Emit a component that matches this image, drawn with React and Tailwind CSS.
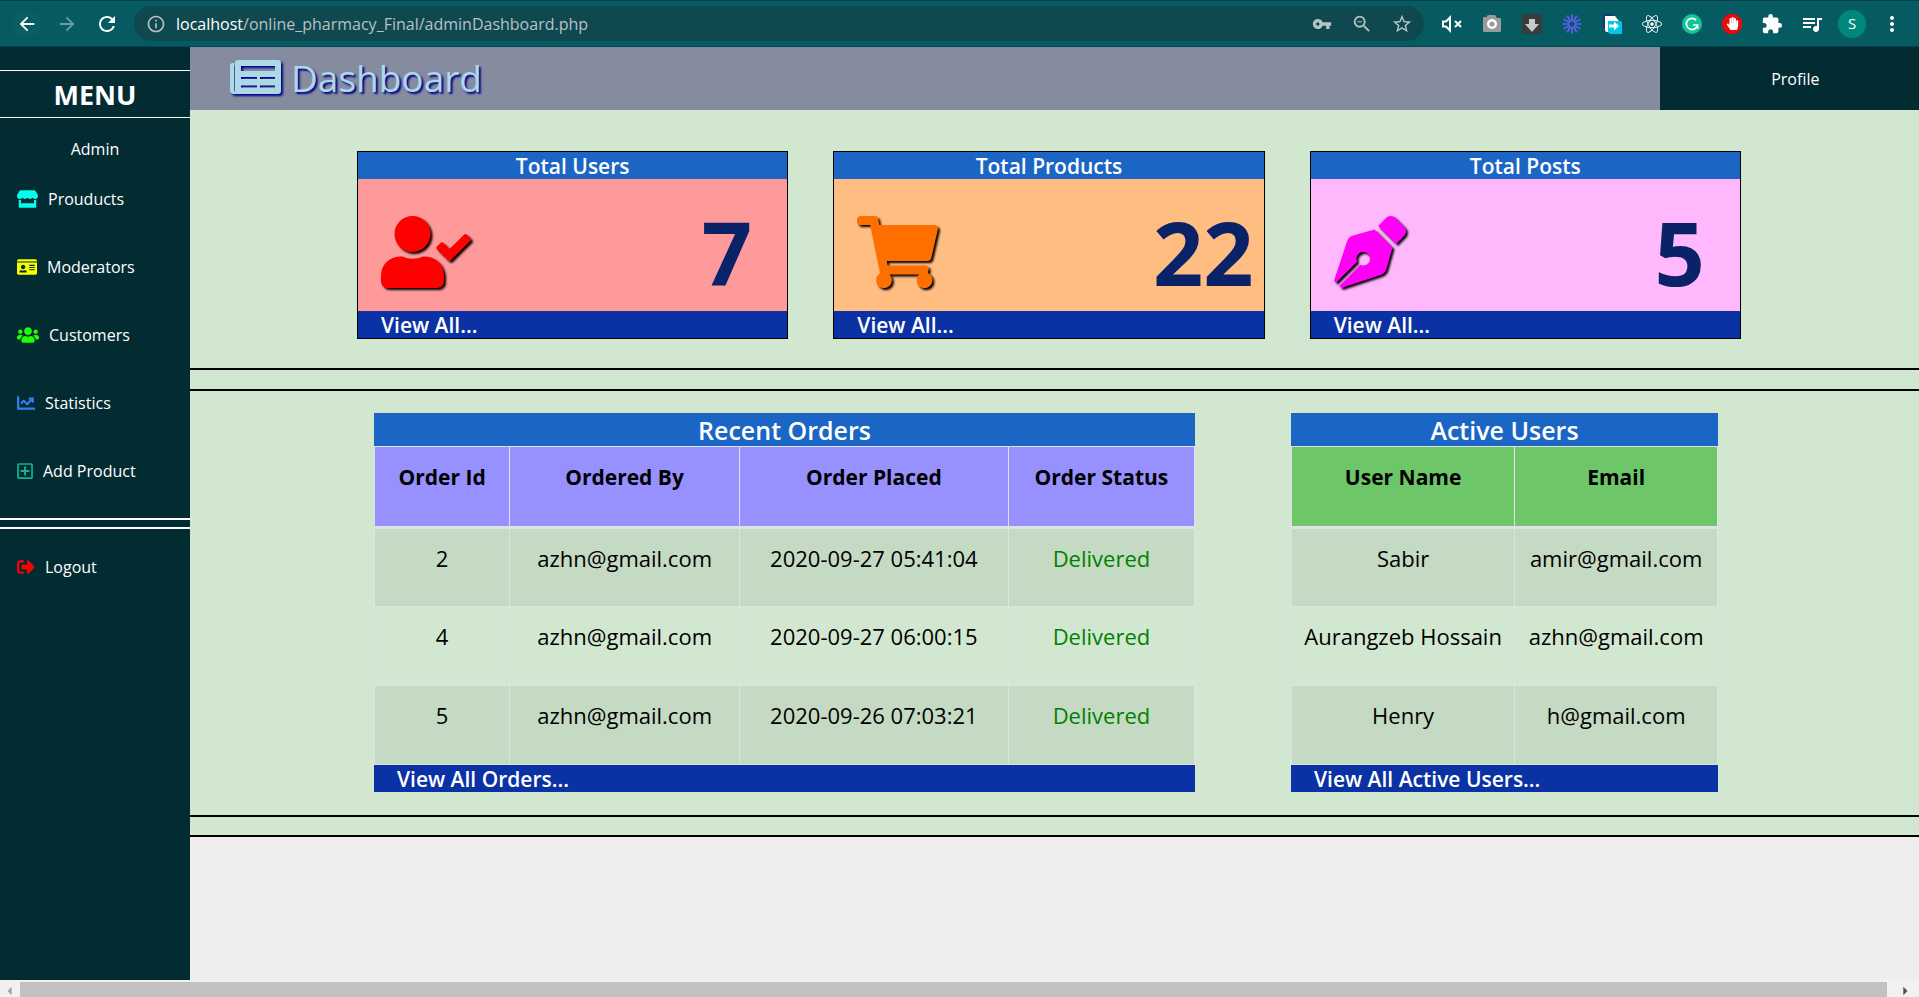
import {
  FaStore, FaIdCard, FaUsers, FaChartLine, FaRegPlusSquare, FaSignOutAlt,
  FaUserCheck, FaShoppingCart, FaPenNib, FaHandPaper, FaReact,
} from "react-icons/fa";
import {
  MdArrowBack, MdArrowForward, MdRefresh, MdInfoOutline, MdVpnKey, MdZoomOut, MdStarBorder,
  MdExtension, MdQueueMusic, MdMoreVert, MdArrowLeft, MdArrowRight,
} from "react-icons/md";

const links = [
  { label: "Prouducts", Icon: FaStore, color: "text-[#00fff0]", size: "w-[21px]" },
  { label: "Moderators", Icon: FaIdCard, color: "text-[#fbff00]", size: "w-[20px]" },
  { label: "Customers", Icon: FaUsers, color: "text-[#1eff00]", size: "w-[22px]" },
  { label: "Statistics", Icon: FaChartLine, color: "text-[#2f7fee]", size: "w-[18px]" },
  { label: "Add Product", Icon: FaRegPlusSquare, color: "text-[#0fb492]", size: "w-[16px]" },
];

const cards = [
  { title: "Total Users", value: "7", Icon: FaUserCheck, bg: "bg-[#ff9a9a]", color: "text-[#ff0000]", size: "w-[90px]" },
  { title: "Total Products", value: "22", Icon: FaShoppingCart, bg: "bg-[#ffbd82]", color: "text-[#ff6f00]", size: "w-[81px]" },
  { title: "Total Posts", value: "5", Icon: FaPenNib, bg: "bg-[#ffb8fb]", color: "text-[#ff00f7]", size: "w-[72px]" },
];

const orders = [
  ["2", "azhn@gmail.com", "2020-09-27 05:41:04", "Delivered"],
  ["4", "azhn@gmail.com", "2020-09-27 06:00:15", "Delivered"],
  ["5", "azhn@gmail.com", "2020-09-26 07:03:21", "Delivered"],
];

const users = [
  ["Sabir", "amir@gmail.com"],
  ["Aurangzeb Hossain", "azhn@gmail.com"],
  ["Henry", "h@gmail.com"],
];

const spokes = [0, 30, 60, 90, 120, 150, 180, 210, 240, 270, 300, 330];

function BarButton({ label, className = "", children }) {
  return (
    <button type="button" aria-label={label} className={`flex size-7 shrink-0 items-center justify-center rounded-full ${className}`}>
      {children}
    </button>
  );
}

function BrowserBar() {
  return (
    <header className="flex h-[47px] items-center border-t border-b border-t-[#03404a] border-b-[#04444b] bg-[#055b61] px-[13px] text-white">
      <BarButton label="Back" className="bg-white/2"><MdArrowBack className="size-[22px]" /></BarButton>
      <BarButton label="Forward" className="ml-3 text-[#6c9ca0]"><MdArrowForward className="size-[22px]" /></BarButton>
      <BarButton label="Reload" className="ml-3"><MdRefresh className="size-6" /></BarButton>
      <div className="ml-[13px] flex h-[35px] flex-1 items-center rounded-full bg-[#10484f] pl-3 pr-2 text-[#b5c3c5]">
        <MdInfoOutline className="size-5" />
        <span className="ml-[10px] flex-1 text-base">
          <span className="text-white">localhost</span>/online_pharmacy_Final/adminDashboard.php
        </span>
        <BarButton label="Passwords"><MdVpnKey className="size-5" /></BarButton>
        <BarButton label="Zoom" className="ml-3"><MdZoomOut className="size-[22px]" /></BarButton>
        <BarButton label="Bookmark" className="ml-3"><MdStarBorder className="size-[22px]" /></BarButton>
      </div>
      <div className="ml-[14px] flex items-center gap-3">
        <BarButton label="Mute tab">
          <svg viewBox="0 0 22 18" className="w-[22px]" fill="none" stroke="currentColor" strokeWidth="2">
            <path d="M2 6.500h3l4-4v13l-4-4H2z" /><path d="M14 6l6 6M20 6l-6 6" />
          </svg>
        </BarButton>
        <BarButton label="Screenshot" className="text-[#9b9b9b]">
          <svg viewBox="0 0 20 20" className="size-5">
            <path d="M2 3h3V1.500h1L7 1h6l2 3h3q1 0 1 1v12q0 1-1 1H2q-1 0-1-1V4q0-1 1-1z" fill="currentColor" /><circle cx="10" cy="10" r="3.800" fill="none" stroke="#fff" strokeWidth="2.400" />
          </svg>
        </BarButton>
        <BarButton label="Downloader">
          <svg viewBox="0 0 20 20" className="size-5">
            <rect width="20" height="20" rx="2" fill="#3b3b3b" /><path d="M7 5h6v5h4l-7 8-7-8h4z" fill="#c9c9c9" />
          </svg>
        </BarButton>
        <BarButton label="Loom">
          <svg viewBox="0 0 20 20" className="size-5" stroke="#625df5" strokeWidth="1.700" strokeLinecap="round">
            {spokes.map((a) => <path key={a} d="M10 1v5.500" transform={`rotate(${a} 10 10)`} />)}
            <circle cx="10" cy="10" r="3.700" fill="none" strokeWidth="1.200" />
          </svg>
        </BarButton>
        <BarButton label="Page export">
          <svg viewBox="0 0 20 20" className="size-5">
            <path d="M1 0h10v14H1z" fill="#0c3f78" /><path d="M3 2h10l4 5v11H5q-2 0-2-2z" fill="#fff" /><path d="M6 7h12q2 0 2 2v11H9q-3 0-3-3z" fill="#00c8e8" /><path d="M7 10.500h5V7.500l5 4.500-5 4.500v-3H7z" fill="#fff" />
          </svg>
        </BarButton>
        <BarButton label="React tools"><FaReact className="size-5" /></BarButton>
        <BarButton label="Grammarly">
          <svg viewBox="0 0 20 20" className="size-5">
            <circle cx="10" cy="10" r="10" fill="#15c39a" />
            <path d="M14.200 6.200a5.600 5.600 0 1 0 1.300 4.800H11M15.600 11v3.800" fill="none" stroke="#fff" strokeWidth="1.700" />
          </svg>
        </BarButton>
        <BarButton label="Ad blocker">
          <svg viewBox="0 0 20 20" className="size-5">
            <path d="M6 0h8l6 6v8l-6 6H6l-6-6V6z" fill="#e80b0b" /><FaHandPaper x="4" y="3" size={13} />
          </svg>
        </BarButton>
        <BarButton label="Extensions"><MdExtension className="size-[22px]" /></BarButton>
        <BarButton label="Media"><MdQueueMusic className="size-6" /></BarButton>
        <BarButton label="Account" className="bg-[#00897b] text-[15px]">S</BarButton>
        <BarButton label="More"><MdMoreVert className="size-6" /></BarButton>
      </div>
    </header>
  );
}

function Sidebar() {
  return (
    <aside className="w-[190px] shrink-0 bg-[#032b32] text-base leading-6 text-white">
      <h2 className="mt-[23px] border-y border-white pt-[2px] text-center text-[27px] leading-[44px] font-bold">MENU</h2>
      <p className="mt-[19px] mb-[14px] text-center">Admin</p>
      <nav>
        {links.map(({ label, Icon, color, size }) => (
          <a key={label} href="#" className="flex h-[68px] items-start pt-3 pl-[17px]">
            <span className="flex h-6 items-center gap-[10px]">
              <Icon className={`${color} ${size} h-[18px]`} />
              {label}
            </span>
          </a>
        ))}
        <div className="mt-[3px] h-[11px] border-y-2 border-white" />
        <a href="#" className="mt-[26px] flex items-center gap-[10px] pl-[17px]">
          <FaSignOutAlt className="size-[18px] text-[#ff0000]" />
          Logout
        </a>
      </nav>
    </aside>
  );
}

function NewspaperIcon({ className }) {
  return (
    <svg viewBox="0 0 51 35" fill="currentColor" className={className}>
      <path fillRule="evenodd" d="M8 0H48q3 0 3 3V31q0 3-3 3H7q-2 0-2-3V3q0-3 3-3zM11 6V11H45V6zM11 17V19H27V17zM30 17V19H45V17zM11 25.500V27.500H27V25.500zM30 25.500V27.500H45V25.500z" />
      <path d="M4.400 3V31l3 3H4q-4 0-4-4V6q0-3 3-3z" />
    </svg>
  );
}

function StatCard({ title, value, Icon, bg, color, size }) {
  return (
    <section className={`border border-black text-[21px] leading-[25px] font-semibold text-white ${bg}`}>
      <h2 className="bg-[#1b66c5] pt-[2px] text-center">{title}</h2>
      <div className="flex h-[132px] items-center justify-between pt-[14px] pr-1 pl-[23px]">
        <Icon className={`h-[72px] ${size} ${color} drop-shadow-[2px_2px_1px_#000]`} />
        <span className="w-[28%] text-center text-[88px] leading-[88px] font-bold text-[#0a2268]">{value}</span>
      </div>
      <a href="#" className="block bg-[#0a32a4] pt-[2px] pl-[23px]">View All...</a>
    </section>
  );
}

function DataTable({ title, headers, widths, rows, headBg, footer }) {
  return (
    <section>
      <h2 className="bg-[#1b66c5] pt-px text-center text-[25px] leading-8 font-semibold text-white">{title}</h2>
      <table className="w-full table-fixed border-collapse text-center text-[22px] leading-7 text-black">
        <thead className={headBg}>
          <tr className="h-[81px]">
            {headers.map((h, i) => (
              <th key={h} className={`border border-b-3 border-[#dee2e6] pt-[14px] pb-[34px] text-[21px] font-bold ${widths[i]}`}>{h}</th>
            ))}
          </tr>
        </thead>
        <tbody>
          {rows.map((row) => (
            <tr key={row.join()} className="h-[79px] odd:bg-[#c5dac3]">
              {row.map((cell, i) => (
                <td key={i} className={`border border-[#dee2e6] pt-[14px] pb-[34px] whitespace-nowrap ${cell === "Delivered" ? "text-[#008000]" : ""}`}>{cell}</td>
              ))}
            </tr>
          ))}
        </tbody>
      </table>
      <a href="#" className="block bg-[#0a32a4] pt-[2px] pl-[23px] text-[21px] leading-[25px] font-semibold text-white">{footer}</a>
    </section>
  );
}

export default function App() {
  return (
    <div className="flex min-h-screen flex-col bg-[#efedee] font-['Open_Sans','Noto_Sans',sans-serif]">
      <BrowserBar />
      <div className="flex flex-1">
        <Sidebar />
        <div className="min-w-0 flex-1">
          <div className="flex h-[63px] bg-[#858c9f]">
            <h1 className="flex flex-1 items-center pb-[2px] pl-10 text-[37px] text-[#add8e6]">
              <NewspaperIcon className="mr-[10px] h-[35px] w-[51px] drop-shadow-[2px_2px_1px_#00008b]" />
              <span className="[text-shadow:2px_2px_2px_#00008b]">Dashboard</span>
            </h1>
            <a href="#" className="flex w-[15%] items-center justify-center bg-[#032b32] pl-3 text-base text-white">Profile</a>
          </div>
          <main className="bg-[#d2e7d0]">
            <div className="grid grid-cols-3 gap-[45px] pt-[41px] pr-[178px] pb-[29px] pl-[167px]">
              {cards.map((c) => <StatCard key={c.title} {...c} />)}
            </div>
            <div className="h-[23px] border-y-2 border-black" />
            <div className="grid grid-cols-[821fr_427fr] gap-24 pt-[22px] pr-[201px] pb-[23px] pl-[184px]">
              <DataTable
                title="Recent Orders"
                headers={["Order Id", "Ordered By", "Order Placed", "Order Status"]}
                widths={["w-[16.5%]", "w-[28%]", "w-[32.8%]", "w-[22.7%]"]}
                rows={orders}
                headBg="bg-[#9691ff]"
                footer="View All Orders..."
              />
              <DataTable
                title="Active Users"
                headers={["User Name", "Email"]}
                widths={["w-[52.4%]", "w-[47.6%]"]}
                rows={users}
                headBg="bg-[#6dc768]"
                footer="View All Active Users..."
              />
            </div>
            <div className="h-[22px] border-y-2 border-black" />
          </main>
        </div>
      </div>
      <div className="flex h-[17px] items-center overflow-hidden bg-[#f1f1f1]">
        <MdArrowLeft className="h-6 w-5 pt-1 text-[#a3a3a3]" />
        <div className="mt-[2px] h-[15px] flex-1 bg-[#c1c1c1]" />
        <MdArrowRight className="h-6 w-8 pt-1 pl-1 text-[#505050]" />
      </div>
    </div>
  );
}
